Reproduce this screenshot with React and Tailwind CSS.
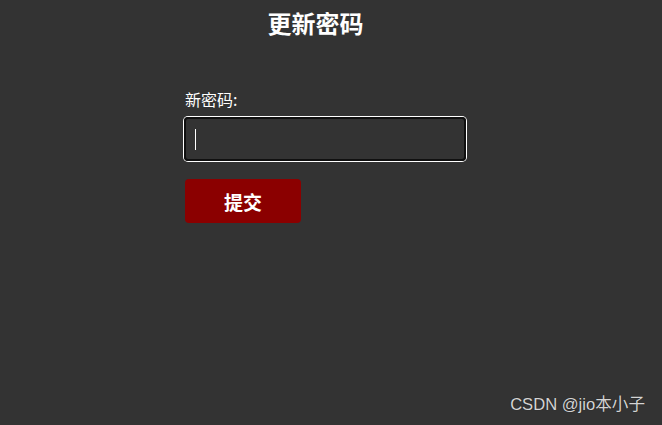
export default function App() {
  return (
    <div
      className="relative w-[662px] h-[425px] bg-[#333333] text-white overflow-hidden"
      style={{ fontFamily: '"Noto Sans CJK SC", "Noto Sans", sans-serif' }}
    >
      <div className="w-[631px] pt-[7px] text-center text-[24px] leading-[32px] font-bold">更新密码</div>
      <div className="ml-[184px] mt-[50px] w-[282px] flex flex-col">
        <div className="ml-[1px] text-[16px] leading-[20px]">新密码:</div>
        <div className="mt-[8px] h-[44px] rounded-[4px] border-2 border-[#101010] shadow-[0_0_0_1px_#ffffff] flex items-center pl-[9px]">
          <span className="block w-[1px] h-[21px] bg-white"></span>
        </div>
        <button className="mt-[18px] ml-[1px] w-[116px] h-[44px] rounded-[4px] bg-[#8b0000] text-white text-[19px] font-bold leading-none">
          提交
        </button>
      </div>
      <div
        className="absolute right-[17px] bottom-[10px] text-[16.6px] leading-[20px] text-[#d4d4d4]"
        style={{ fontFamily: '"Liberation Sans", "Noto Sans CJK SC", sans-serif', textShadow: '0 0 1px rgba(0,0,0,0.5)' }}
      >
        CSDN @jio本小子
      </div>
    </div>
  );
}
